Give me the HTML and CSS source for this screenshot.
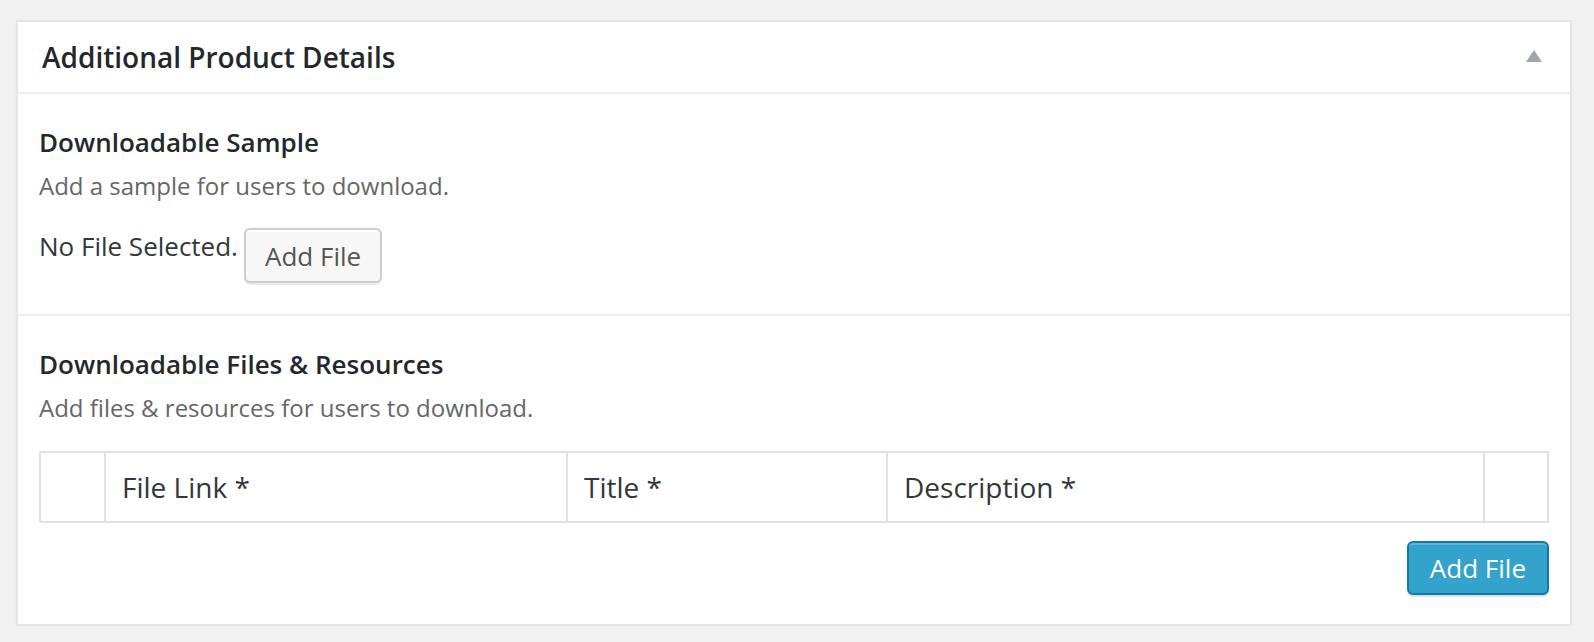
FILE: index.html
```html
<!DOCTYPE html>
<html lang="en">
<head>
<meta charset="utf-8">
<title>Additional Product Details</title>
<link rel="stylesheet" href="styles.css">
</head>
<body>
<div class="postbox">
  <div class="postbox-header">
    <h2 class="postbox-title">Additional Product Details</h2>
    <svg class="toggle" width="16" height="12" viewBox="0 0 16 12" aria-hidden="true"><polygon points="8,0 16,12 0,12" fill="#a0a5aa"/></svg>
  </div>
  <div class="section">
    <h4 class="section-title">Downloadable Sample</h4>
    <p class="section-desc">Add a sample for users to download.</p>
    <div class="file-row">
      <span class="file-status">No File Selected.</span>
      <button class="button">Add File</button>
    </div>
  </div>
  <div class="section last">
    <h4 class="section-title">Downloadable Files &amp; Resources</h4>
    <p class="section-desc">Add files &amp; resources for users to download.</p>
    <div class="files-table">
      <div class="cell"></div>
      <div class="cell">File Link *</div>
      <div class="cell">Title *</div>
      <div class="cell">Description *</div>
      <div class="cell"></div>
    </div>
    <div class="actions">
      <button class="button button-primary">Add File</button>
    </div>
  </div>
</div>
</body>
</html>
```

FILE: styles.css
```css
html, body {
  margin: 0;
  padding: 0;
  background: #f1f1f1;
}
body {
  padding: 20px 22px 0 16px;
  font-family: "Open Sans", "Noto Sans", sans-serif;
  color: #444;
}
.postbox {
  width: 1556px;
  box-sizing: border-box;
  background: #fff;
  border: 2px solid #e5e5e5;
  box-shadow: 0 2px 3px rgba(0, 0, 0, 0.05);
}
.postbox-header {
  display: flex;
  align-items: center;
  justify-content: space-between;
  padding: 17px 28px 17px 24px;
  border-bottom: 2px solid #eeeeee;
}
.postbox-title {
  margin: 0;
  font-size: 28px;
  line-height: 36px;
  font-weight: 600;
  color: #23282d;
}
.toggle {
  display: block;
  margin-top: -2px;
}
.section {
  padding: 31px 21px 31px 21px;
  border-bottom: 2px solid #eeeeee;
}
.section.last {
  border-bottom: 0;
  padding-bottom: 29px;
}
.section-title {
  margin: 0;
  font-size: 26px;
  line-height: 34px;
  font-weight: 600;
  color: #23282d;
}
.section-desc {
  margin: 11px 0 0;
  font-size: 24px;
  line-height: 32px;
  color: #666;
}
.file-row {
  display: flex;
  align-items: flex-start;
  gap: 6px;
  margin-top: 26px;
}
.file-status {
  margin-top: 1px;
  font-size: 26px;
  line-height: 34px;
  color: #32373c;
}
.button {
  box-sizing: border-box;
  margin: 0;
  padding: 1px 19px 0;
  height: 55px;
  font-family: "Open Sans", "Noto Sans", sans-serif;
  font-size: 26px;
  line-height: 50px;
  color: #555;
  background: #f7f7f7;
  border: 2px solid #cccccc;
  border-radius: 6px;
  box-shadow: inset 0 2px 0 #fff, 0 2px 0 rgba(0, 0, 0, 0.08);
  white-space: nowrap;
  cursor: pointer;
}
.button-primary {
  padding: 0 21px;
  height: 54px;
  color: #fff;
  background: #33a3cc;
  border-color: #1079a6;
  box-shadow: inset 0 2px 0 rgba(120, 200, 230, 0.6), 0 2px 0 rgba(0, 0, 0, 0.12);
}
.files-table {
  display: grid;
  grid-template-columns: 63px 462px 320px 597px 1fr;
  margin-top: 27px;
  border: 2px solid #e1e1e1;
}
.cell {
  padding: 16px 16px;
  font-size: 28px;
  line-height: 36px;
  color: #32373c;
  border-left: 2px solid #e1e1e1;
}
.cell:first-child {
  border-left: 0;
}
.actions {
  display: flex;
  justify-content: flex-end;
  margin-top: 18px;
}
```
